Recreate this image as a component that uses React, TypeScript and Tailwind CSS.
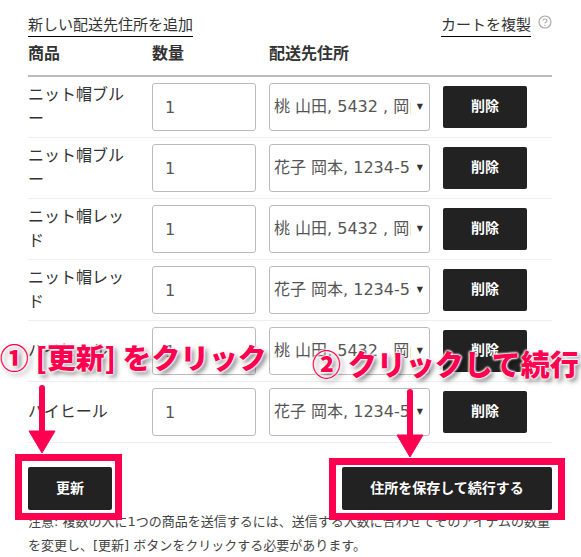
import React from 'react';

const rows = [
  { name: 'ニット帽ブルー', address: '桃 山田, 5432 , 岡山県' },
  { name: 'ニット帽ブルー', address: '花子 岡本, 1234-5678 岡山県' },
  { name: 'ニット帽レッド', address: '桃 山田, 5432 , 岡山県' },
  { name: 'ニット帽レッド', address: '花子 岡本, 1234-5678 岡山県' },
  { name: 'ハイヒール', address: '桃 山田, 5432 , 岡山県' },
  { name: 'ハイヒール', address: '花子 岡本, 1234-5678 岡山県' },
];

const font = "font-['DejaVu_Sans','Noto_Sans_CJK_JP',sans-serif]";

function Arrow({ className }: { className: string }) {
  return (
    <svg className={className} width="30" height="70" viewBox="0 0 30 70">
      <path d="M15 3 V50" stroke="#ff0050" strokeWidth="6" strokeLinecap="round" />
      <path d="M2 46 H28 L15 68 Z" fill="#ff0050" stroke="#ff0050" strokeLinejoin="round" />
    </svg>
  );
}

function Label({ className, children }: { className: string; children: React.ReactNode }) {
  return (
    <div className={`absolute whitespace-nowrap font-black text-[#ff0050] [font-family:'Noto_Sans_CJK_JP',sans-serif] [text-shadow:0_0_2px_#fff,0_0_2px_#fff,0_0_3px_#fff,0_0_3px_#fff,3px_3px_5px_#0008] ${className}`}>
      {children}
    </div>
  );
}

export default function App() {
  return (
    <div className={`relative h-[557px] w-[581px] overflow-hidden bg-white pl-[28px] pr-[29px] text-[#333] ${font}`}>
      <div className="flex h-[37px] items-end justify-between pr-[21px] text-[15px]">
        <a className="border-b border-black leading-[22px]">新しい配送先住所を追加</a>
        <a className="border-b border-black leading-[22px]">カートを複製</a>
      </div>
      <svg className="absolute left-[538px] top-[15px]" width="14" height="14" viewBox="0 0 14 14" fill="none" stroke="#aaa" strokeWidth="1.2">
        <circle cx="7" cy="7" r="6" />
        <path d="M5 5.5 C5 3.5 9 3.5 9 5.5 C9 7 7 6.8 7 8.5" />
        <path d="M7 10 V11" />
      </svg>

      <div className="flex h-[40px] items-center border-b-2 border-[#bbb] pb-[4px] text-[16px] font-bold">
        <div className="w-[124px]">商品</div>
        <div className="w-[117px]">数量</div>
        <div>配送先住所</div>
      </div>

      {rows.map((row, i) => (
        <div key={i} className="flex h-[61px] items-center border-b border-[#eee]">
          <div className="w-[124px] pr-[20px] text-[16px] leading-[24px]">{row.name}</div>
          <input
            readOnly
            value="1"
            className="h-[48px] w-[104px] rounded-[3px] border border-[#bbb] px-[12px] text-[16px] text-[#555]"
          />
          <div className="relative ml-[13px] flex h-[48px] w-[161px] items-center overflow-hidden rounded-[3px] border border-[#bbb] pl-[4px] text-[16px] text-[#555]">
            <span className="w-[137px] overflow-hidden whitespace-nowrap">{row.address}</span>
            <span className="absolute right-[6px] text-[8px] text-[#333]">▼</span>
          </div>
          <button className="ml-[13px] h-[42px] w-[84px] rounded-[2px] bg-[#222] pb-[1px] text-[14px] font-bold text-white">削除</button>
        </div>
      ))}

      <div className="mt-[24px] flex justify-between">
        <button className="h-[43px] w-[84px] rounded-[2px] bg-[#222] text-[14px] font-bold text-white">更新</button>
        <button className="h-[43px] w-[210px] rounded-[2px] bg-[#222] text-[14px] font-bold text-white">住所を保存して続行する</button>
      </div>
      <p className="text-[13px] leading-[24px] text-[#444]">
        注意: 複数の人に1つの商品を送信するには、送信する人数に合わせてそのアイテムの数量を変更し、[更新] ボタンをクリックする必要があります。
      </p>

      <div className="absolute left-[15px] top-[454px] h-[66px] w-[107px] border-[7px] border-[#ff0050]" />
      <div className="absolute left-[329px] top-[458px] h-[62px] w-[236px] border-[7px] border-[#ff0050]" />
      <Arrow className="absolute left-[27px] top-[385px]" />
      <Arrow className="absolute left-[395px] top-[389px]" />
      <Label className="left-0 top-[335px] text-[28.8px]">① [更新] をクリック</Label>
      <Label className="left-[312px] top-[342px] text-[29px]">② クリックして続行</Label>
    </div>
  );
}
